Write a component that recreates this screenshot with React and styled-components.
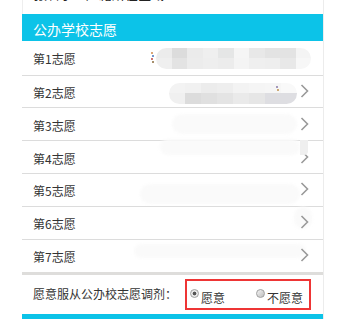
import styled, { createGlobalStyle } from "styled-components";

const GlobalStyle = createGlobalStyle`
  html, body {
    margin: 0;
    padding: 0;
    background: #fff;
  }
  body {
    font-family: "Noto Sans CJK SC", "Microsoft YaHei", sans-serif;
    color: #333;
  }
`;

// mosaic colours of the redacted school names
const mosaicOne = [
  ["#ececec", "#dcdcdc", "#ebebeb", "#efefef", "#e5e6e6", "#f5f5f5", "#e8e8e8", "#e3e3e3", "#e3e3e3", "#f4f4f4"],
  ["#efefef", "#e3e3e3", "#ececec", "#eeeeee", "#ececec", "#f4f4f4", "#efefef", "#eeeeee", "#e8e8e8", "#f7f7f7"],
];
const mosaicTwo = [
  ["#f3f3f3", "#f1f1f1", "#ececec", "#eeeeee", "#f3f3f3", "#f5f5f5", "#f6f6f6", "#f9f9f9"],
  ["#f0f0f0", "#dcdcdc", "#e0e0e0", "#e4e4e4", "#eaeaea", "#e6e6e6", "#dedee2", "#dedee2"],
];

const rows = [
  { label: "第1志愿", arrow: false, mosaic: mosaicOne, blob: { left: 134, top: 7, width: 155, height: 21 } },
  { label: "第2志愿", arrow: true, mosaic: mosaicTwo, blob: { left: 147, top: 7, width: 128, height: 21 } },
  { label: "第3志愿", arrow: true, faint: { left: 150, top: 6, width: 125, height: 20 } },
  { label: "第4志愿", arrow: true, faint: { left: 138, top: -2, width: 140, height: 16 }, cover: true },
  { label: "第5志愿", arrow: true, faint: { left: 118, top: 10, width: 160, height: 20 } },
  { label: "第6志愿", arrow: true, faint: { left: 272, top: 0, width: 18, height: 22 } },
  { label: "第7志愿", arrow: true, faint: { left: 112, top: 4, width: 172, height: 14 } },
];

const Chevron = () => (
  <svg width="9" height="14" viewBox="0 0 9 14">
    <polyline points="1.5,1 7.5,7 1.5,13" fill="none" stroke="#9a9a9a" strokeWidth="1.6" />
  </svg>
);

// leftover coloured specks at the edge of the mosaic
const Specks = ({ colors }) => (
  <svg width="4" height="12" viewBox="0 0 4 12">
    {colors.map((c, i) => (
      <rect key={i} x={i % 2} y={i * 3} width="2" height="2" fill={c} />
    ))}
  </svg>
);

const Mosaic = ({ grid, box }) => (
  <MosaicBox style={{ left: box.left, top: box.top, width: box.width, height: box.height }}>
    {grid.map((line, r) => (
      <MosaicLine key={r}>
        {line.map((c, i) => (
          <MosaicCell key={i} style={{ background: c }} />
        ))}
      </MosaicLine>
    ))}
  </MosaicBox>
);

const App = () => {
  return (
    <>
      <GlobalStyle />
      <Column>
        <TopStub>
          <StubText>
            报名学生户籍所在区域<Purple>*</Purple>
          </StubText>
        </TopStub>
        <Header>公办学校志愿</Header>
        {rows.map((row, i) => (
          <Row key={i} first={i === 0} last={i === rows.length - 1}>
            {row.faint && (
              <Faint
                style={{
                  left: row.faint.left,
                  top: row.faint.top,
                  width: row.faint.width,
                  height: row.faint.height,
                }}
              />
            )}
            <RowLabel>{row.label}</RowLabel>
            {row.arrow && (
              <ArrowSlot>
                <Chevron />
              </ArrowSlot>
            )}
            {row.mosaic && <Mosaic grid={row.mosaic} box={row.blob} />}
            {i === 0 && (
              <SpeckSpot left={129} top={11}>
                <Specks colors={["#d08a4a", "#4a78c0", "#c04a4a", "#8a6a3a"]} />
              </SpeckSpot>
            )}
            {i === 1 && (
              <SpeckSpot left={254} top={10}>
                <Specks colors={["#8a7aa8", "#c0904a"]} />
              </SpeckSpot>
            )}
            {row.cover && <ArrowCover />}
          </Row>
        ))}
        <Band />
        <AdjustRow>
          <AdjustLabel>愿意服从公办校志愿调剂：</AdjustLabel>
          <Choices>
            <Choice>
              <Radio checked />
              <ChoiceText>愿意</ChoiceText>
            </Choice>
            <Choice>
              <Radio />
              <ChoiceText>不愿意</ChoiceText>
            </Choice>
          </Choices>
        </AdjustRow>
        <FootBar />
      </Column>
    </>
  );
};

export default App;

const Column = styled.div`
  margin-left: 22px;
  width: 301px;
  border-right: 1px solid #ececec;
  display: flex;
  flex-direction: column;
  height: 319px;
  overflow: hidden;
`;

const TopStub = styled.div`
  height: 14px;
  border-left: 1px solid #eeeeee;
  overflow: hidden;
  box-sizing: border-box;
`;

const StubText = styled.div`
  margin-top: -13px;
  padding-left: 11px;
  font-size: 13px;
  line-height: 14px;
  color: #222;
  white-space: nowrap;
`;

const Purple = styled.span`
  margin-left: 42px;
  color: #a04a90;
`;

const Header = styled.div`
  height: 27px;
  background: #0cc3e8;
  color: #fff;
  font-size: 14px;
  line-height: 31px;
  padding-left: 11px;
  box-sizing: border-box;
`;

const Row = styled.div`
  position: relative;
  height: ${(p) => (p.first ? 35 : 33)}px;
  box-sizing: border-box;
  border-bottom: ${(p) => (p.last ? "none" : "1px solid #dcdcdc")};
  display: flex;
  align-items: center;
  padding: 2px 14px 0 11px;
  font-size: 12px;
`;

const RowLabel = styled.span`
  position: relative;
  flex: 1;
  color: #333;
`;

const ArrowSlot = styled.span`
  position: relative;
  display: flex;
  margin-top: -3px;
`;

const MosaicBox = styled.div`
  position: absolute;
  display: flex;
  flex-direction: column;
  border-radius: 11px;
  overflow: hidden;
  filter: blur(0.4px);
`;

const MosaicLine = styled.div`
  flex: 1;
  display: flex;
`;

const MosaicCell = styled.span`
  flex: 1;
`;

const Faint = styled.div`
  position: absolute;
  background: #fafafa;
  border-radius: 10px;
  filter: blur(1.5px);
`;

const ArrowCover = styled.div`
  position: absolute;
  right: 15px;
  top: -1px;
  width: 8px;
  height: 15px;
  background: #efefef;
  border-radius: 0 0 4px 0;
`;

const SpeckSpot = styled.span`
  position: absolute;
  left: ${(p) => p.left}px;
  top: ${(p) => p.top}px;
  display: flex;
  opacity: 0.75;
`;

const Band = styled.div`
  height: 3px;
  background: #dedddb;
`;

const AdjustRow = styled.div`
  height: 39px;
  display: flex;
  align-items: center;
  padding-left: 11px;
  font-size: 12px;
`;

const AdjustLabel = styled.span`
  color: #333;
  margin-top: -2px;
`;

const Choices = styled.div`
  margin-left: 8px;
  width: 126px;
  height: 31px;
  box-sizing: border-box;
  border: 2px solid #ee3535;
  display: flex;
  align-items: center;
  padding-left: 3px;
  gap: 31px;
`;

const Choice = styled.label`
  display: flex;
  align-items: center;
  gap: 2px;
`;

const Radio = styled.span`
  width: 9px;
  height: 9px;
  border-radius: 50%;
  box-sizing: border-box;
  border: 1px solid #a0a0a0;
  background: ${(p) =>
    p.checked
      ? "radial-gradient(circle, #555 0 1.6px, #e9e9e9 2.2px)"
      : "linear-gradient(135deg, #f4f4f4, #bdbdbd)"};
  margin-top: -3px;
`;

const ChoiceText = styled.span`
  margin-top: 5px;
  color: #333;
`;

const FootBar = styled.div`
  height: 5px;
  background: #0cc3e8;
`;
